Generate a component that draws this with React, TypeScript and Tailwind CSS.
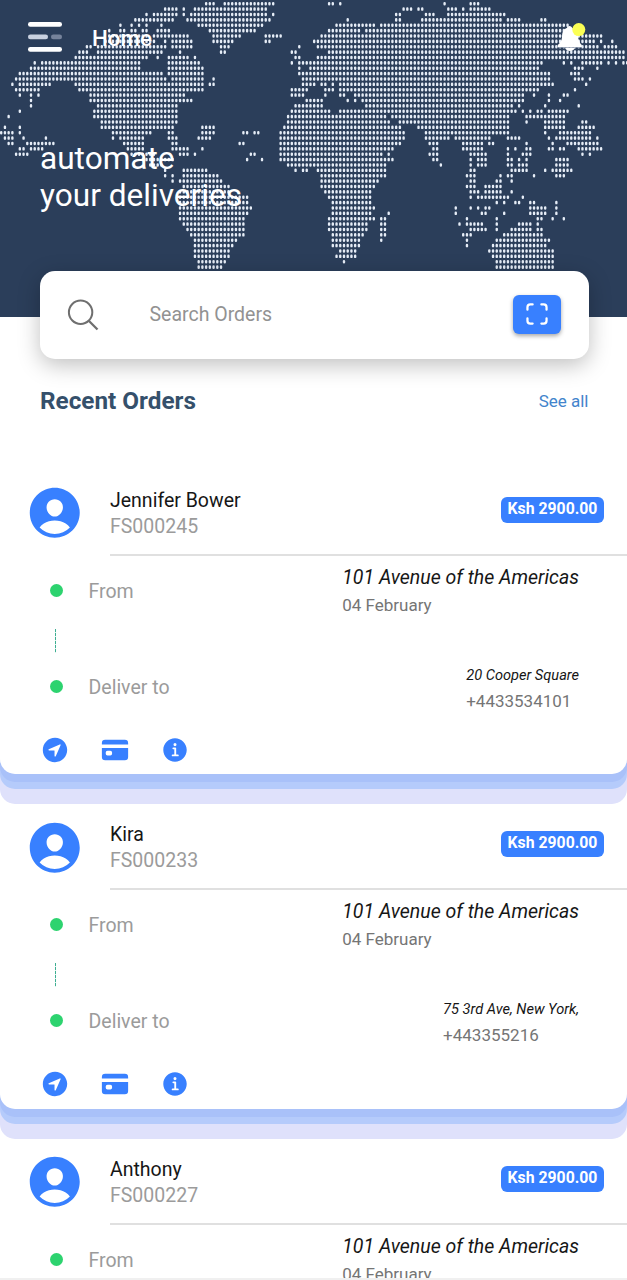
import React from "react";
import {
  IoCard,
  IoInformationCircle,
  IoNavigateCircle,
  IoPersonCircle,
  IoScan,
} from "react-icons/io5";

type Span = [number, number?];

// Dotted world map: each row holds [start, end] spans, in thirds of a pixel.
const MAP_ROWS: Span[][] = [
  [[619, 644], [673, 822], [987, 998], [1021], [1333], [1411, 1434]],
  [[496, 530], [552], [580, 800], [1212, 1235], [1255, 1267], [1344, 1371], [1389], [1411, 1468]],
  [[439], [462, 530], [552], [575, 800], [820], [1190, 1200], [1276, 1301], [1344, 1513]],
  [[406, 518], [563, 810], [1043], [1190, 1200], [1265, 1501], [1524, 1559], [1623, 1636]],
  [[361], [395], [417], [439], [484], [600, 788], [1010, 1122], [1144, 1701]],
  [[328], [361, 372], [395, 406], [428, 440], [470, 507], [630, 765], [987, 1077], [1100, 1711]],
  [[328, 440], [462, 507], [518, 565], [640, 720], [796, 842], [965, 1803]],
  [[320, 460], [490], [518, 575], [640, 698], [796, 810], [943, 1780], [1801], [1836]],
  [[260, 270], [290, 495], [518, 575], [662, 690], [897], [950, 1796], [1811, 1848]],
  [[238, 262], [295, 485], [540], [662, 675], [875, 887], [987, 1871]],
  [[227, 440], [473], [507, 565], [585], [887, 897], [955, 1871]],
  [[104], [126, 415], [507, 600], [875], [897, 1623], [1691], [1713], [1746, 1801], [1826], [1848], [1870, 1881]],
  [[93, 415], [507, 608], [897], [931, 1613], [1724, 1746], [1792]],
  [[59, 485], [507, 608], [897, 1649], [1713, 1736]],
  [[48, 495], [518, 608], [640], [908, 1649], [1724, 1746], [1769]],
  [[37], [59, 150], [227, 608], [630, 640], [908, 930], [943], [965, 976], [998], [1021, 1659], [1758]],
  [[48, 115], [238, 608], [875, 920], [976, 998], [1021, 1613], [1724]],
  [[59], [93], [115], [272, 552], [875, 910], [976], [1021, 1032], [1065, 1571], [1601], [1646], [1691, 1701]],
  [[93], [272, 575], [920, 965], [1043], [1065], [1087, 1569], [1646], [1679]],
  [[93], [290, 530], [885, 965], [1100, 1534], [1556], [1636], [1736]],
  [[59], [283, 530], [875, 987], [1021, 1077], [1092, 1546], [1568], [1591], [1613, 1625], [1646], [1657, 1703]],
  [[26], [283, 530], [864, 1160], [1177, 1523], [1579, 1691]],
  [[305, 530], [864, 1170], [1205, 1523], [1579], [1636, 1691], [1746, 1758]],
  [[14], [59], [305, 518], [608, 644], [852, 1205], [1255, 1523], [1636, 1691], [1736, 1781]],
  [[3, 37], [59], [338, 450], [507, 518], [608, 644], [729, 742], [763, 776], [841, 1212], [1276, 1523], [1636], [1681, 1771]],
  [[14, 37], [71], [138], [338], [361, 430], [507, 530], [597, 630], [841, 1212], [1276, 1311], [1321, 1346], [1366, 1466], [1523, 1559], [1646], [1668, 1771], [1792]],
  [[26, 37], [82, 160], [372, 430], [518, 530], [718, 730], [841, 1200], [1288, 1311], [1389, 1446], [1468, 1479], [1579], [1659], [1701, 1791]],
  [[59, 71], [93, 126], [384, 430], [518, 530], [541, 563], [608], [841, 1177], [1299, 1311], [1389, 1446], [1523], [1546], [1579, 1591], [1646, 1657], [1679, 1691], [1736, 1803]],
  [[48, 82], [395, 462], [540, 563], [585], [752, 764], [841, 1145], [1165], [1288, 1311], [1411, 1456], [1523], [1568, 1591], [1746], [1769]],
  [[430, 518], [742], [786], [841, 1177], [1299, 1311], [1411], [1434, 1456], [1523, 1536], [1556], [1579], [1668, 1701]],
  [[450, 485], [864, 1157], [1322], [1411], [1434, 1456], [1523, 1536], [1556, 1579], [1668, 1679], [1691, 1701]],
  [[495], [552, 620], [886], [909, 920], [954, 1157], [1411, 1423], [1534, 1579], [1636], [1659, 1713]],
  [[495], [518], [552, 655], [965, 1157], [1401, 1423], [1501], [1523, 1534], [1601], [1668, 1691]],
  [[518], [540, 665], [965, 1135], [1411, 1423], [1491, 1501], [1534]],
  [[552, 685], [965, 1125], [1401, 1423], [1456, 1501]],
  [[540, 690], [976, 1115], [1411, 1434], [1456, 1501], [1534]],
  [[540, 740], [987, 1115], [1411], [1434, 1523], [1568]],
  [[540, 740], [998, 1115], [1491], [1513], [1546, 1557], [1591, 1601], [1668]],
  [[540, 752], [998, 1122], [1366], [1411], [1434], [1456, 1468], [1591, 1636], [1668]],
  [[540, 742], [998, 1115], [1165], [1366], [1445, 1456], [1513], [1591, 1636], [1668]],
  [[540, 732], [987, 1122], [1144, 1155], [1401], [1491], [1613, 1623], [1657], [1691]],
  [[552, 732], [987, 1100], [1144, 1155], [1377], [1401, 1446], [1491], [1557, 1591], [1613]],
  [[563, 732], [987, 1100], [1144, 1155], [1411, 1456], [1491], [1534, 1591], [1613, 1623]],
  [[575, 732], [998, 1089], [1144, 1155], [1389, 1411], [1513, 1626]],
  [[585, 710], [998, 1077], [1144], [1401], [1491, 1646]],
  [[585, 697], [998, 1077], [1401], [1479, 1636]],
  [[585, 688], [1021, 1067], [1468, 1659]],
  [[585, 688], [1010, 1067], [1479, 1659]],
  [[597, 677], [1031], [1491, 1659]],
  [[597, 665], [1491, 1546], [1557, 1659]],
];

const PITCH_X = 3.726;
const PITCH_Y = 5.375;
const toColumn = (unit: number) => Math.round((unit / 3 - 1.2) / PITCH_X);

const MAP_PATH = MAP_ROWS.map((spans, row) => {
  const y = (3.1 + row * PITCH_Y).toFixed(2);
  let d = "";
  for (const [start, end] of spans) {
    for (let c = toColumn(start); c <= toColumn(end ?? start); c++) {
      d += `M${(1.2 + c * PITCH_X).toFixed(2)} ${y}v1.2`;
    }
  }
  return d;
}).join("");

function WorldMap() {
  return (
    <svg className="absolute inset-0" width="627" height="271" viewBox="0 0 627 271" fill="none">
      <path d={MAP_PATH} stroke="#e6edf7" strokeWidth="2.4" strokeLinecap="round" />
    </svg>
  );
}

function MenuIcon() {
  return (
    <svg width="34" height="30" viewBox="0 0 34 30">
      <rect width="34" height="4.8" rx="2.3" fill="#fff" />
      <rect y="12.4" width="20" height="4.8" rx="2.3" fill="#c9d1e0" />
      <rect x="23" y="12.4" width="11" height="4.8" rx="2.3" fill="#76839b" />
      <rect y="25" width="34" height="4.8" rx="2.3" fill="#fff" />
    </svg>
  );
}

function BellIcon() {
  return (
    <svg className="mt-[3px]" width="30" height="32" viewBox="0 0 30 32">
      <path
        d="M13.500 3c-1.500 0-2.300 1-2.600 2C7.500 6.200 6.300 9 6.100 12.500c-.2 4.500-1 6.500-4.300 9.500v2h24V22c-2.700-3-3.500-5-3.700-9.500C22 9 20 6.200 16.200 5 15.900 4 15 3 13.500 3z"
        fill="#fff"
      />
      <path d="M1.800 24h24v.8h-24z" fill="#8794a8" />
      <path d="M9 24.800h10c-.5 2-2.400 3.200-5 3.200s-4.500-1.200-5-3.200z" fill="#fff" />
      <circle cx="22.800" cy="6.600" r="6.500" fill="#fbff55" />
    </svg>
  );
}

function SearchIcon() {
  return (
    <svg width="32" height="32" viewBox="0 0 32 32" fill="none" stroke="#6f6f6f" strokeWidth="2">
      <circle cx="13.600" cy="13.300" r="11.700" />
      <path d="M21.500 21.500l9 9" strokeWidth="2.300" />
    </svg>
  );
}

interface Order {
  name: string;
  id: string;
  delivery?: { address: string; phone: string };
}

const ORDERS: Order[] = [
  { name: "Jennifer Bower", id: "FS000245", delivery: { address: "20 Cooper Square", phone: "+4433534101" } },
  { name: "Kira", id: "FS000233", delivery: { address: "75 3rd Ave, New York,", phone: "+443355216" } },
  { name: "Anthony", id: "FS000227" },
];

function Dot() {
  return <span className="mb-[1px] h-[13px] w-[13px] shrink-0 rounded-full bg-[#2dd36f]" />;
}

function OrderCard({ name, id, delivery }: Order) {
  return (
    <article className="mb-[30px] h-[304.5px] shrink-0 rounded-[15px] bg-white shadow-[0_8px_0_#a9c1f9,0_15px_0_#b5cbfb,0_30px_0_#dfe1fb]">
      <div className="flex h-[86px] pl-[30px]">
        <IoPersonCircle className="-ml-[6px] mt-[12.500px] size-[61.500px] shrink-0 text-[#3880ff]" />
        <div className="ml-[24.500px] flex flex-1 justify-between border-b-2 border-[#e0e0e0] pr-[23px]">
          <div className="pt-[18px] text-[19.500px] leading-[26px]">
            <h3 className="text-[#161616]">{name}</h3>
            <p className="text-[#9b9b9b]">{id}</p>
          </div>
          <span className="mt-[27px] h-[26px] w-[103px] rounded-[6px] bg-[#3880ff] text-center text-[15.800px] font-bold leading-[23px] text-white">
            Ksh 2900.00
          </span>
        </div>
      </div>

      <div className="flex h-[73px] pl-[50px] pr-[48px]">
        <div className="flex h-[70px] flex-1 items-center">
          <Dot />
          <span className="ml-[25.500px] pt-[2px] text-[19.500px] text-[#9b9b9b]">From</span>
        </div>
        <div className="pt-[8px]">
          <p className="text-[19.500px] italic leading-[28px] text-[#161616]">101 Avenue of the Americas</p>
          <p className="text-[17px] leading-[27px] text-[#757575]">04 February</p>
        </div>
      </div>

      {delivery && (
        <>
          <div className="ml-[55px] h-[24px] w-px bg-[repeating-linear-gradient(to_bottom,#3fae92_0px,#3fae92_3px,#d9f2ea_3px,#d9f2ea_4px)]" />

          <div className="flex h-[67px] pl-[50px] pr-[48px]">
            <div className="flex h-[68px] flex-1 items-center">
              <Dot />
              <span className="ml-[25.500px] pt-[2px] text-[19.500px] text-[#9b9b9b]">Deliver to</span>
            </div>
            <div className="pt-[9px]">
              <p className="text-[14.600px] italic leading-[27px] text-[#161616]">{delivery.address}</p>
              <p className="text-[17px] leading-[25px] text-[#757575]">{delivery.phone}</p>
            </div>
          </div>

          <div className="flex items-center pl-[40px] pt-[15px] text-[#3880ff]">
            <IoNavigateCircle className="size-[30px]" />
            <IoCard className="ml-[30px] size-[30px]" />
            <IoInformationCircle className="ml-[30px] size-[30px]" />
          </div>
        </>
      )}
    </article>
  );
}

export default function App() {
  return (
    <div className="flex h-[1280px] w-[627px] flex-col overflow-hidden bg-white font-['Roboto',sans-serif]">
      <div className="flex min-h-0 flex-1 flex-col overflow-hidden">
        <header className="relative h-[317px] shrink-0 bg-[#2b3e5a] text-white">
          <WorldMap />
          <div className="relative flex h-[74px] items-center pl-[28px] pr-[41px]">
            <MenuIcon />
            <h1 className="ml-[30px] flex-1 pt-[3px] text-[22.300px] font-medium">Home</h1>
            <BellIcon />
          </div>
          <p className="relative ml-[40px] mt-[66px] text-[31.600px] leading-[37px]">
            automate
            <br />
            your deliveries
          </p>
        </header>

        <div className="relative mx-[40px] -mt-[46px] flex h-[88px] w-[549px] shrink-0 items-center rounded-[15px] bg-white pl-[27px] pr-[28px] shadow-[0_6px_22px_rgba(0,0,0,0.25)]">
          <SearchIcon />
          <span className="ml-[50.500px] flex-1 text-[19.500px] text-[#929292]">Search Orders</span>
          <button className="mb-[1px] flex h-[39px] w-[48px] items-center justify-center rounded-[6px] bg-[#3880ff] text-white shadow-[0_2px_4px_rgba(0,0,0,0.35)]">
            <IoScan className="mb-[1px] size-[26px]" />
          </button>
        </div>

        <div className="flex h-[110.500px] shrink-0 items-start justify-between pl-[40px] pr-[38.500px] pt-[24px]">
          <h2 className="text-[24.300px] font-bold leading-[36px] text-[#35506b]">Recent Orders</h2>
          <a className="text-[17px] leading-[36px] text-[#4284cc]">See all</a>
        </div>

        <main className="flex flex-col">
          {ORDERS.map((order) => (
            <OrderCard key={order.id} {...order} />
          ))}
        </main>
      </div>
      <div className="h-[2px] shrink-0 bg-[#f0f0f0]" />
    </div>
  );
}
